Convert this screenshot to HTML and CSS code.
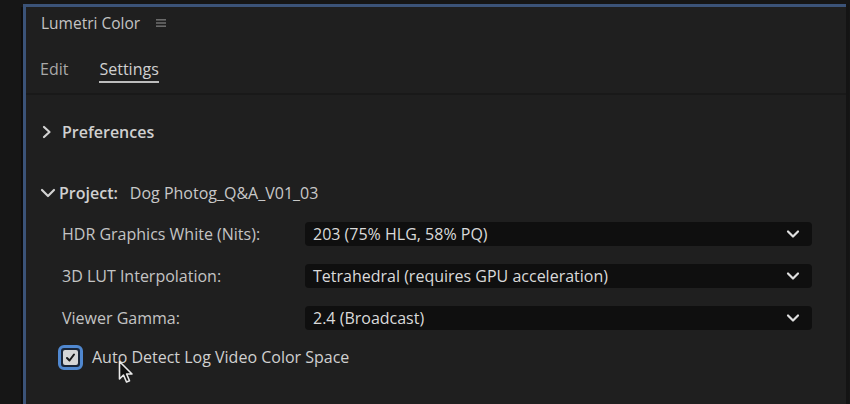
FILE: index.html
```html
<!DOCTYPE html>
<html>
<head>
<meta charset="utf-8">
<link rel="stylesheet" href="styles.css">
</head>
<body>
<div class="app">
  <div class="gutter"></div>
  <div class="panel">
    <div class="header">
      <span class="title">Lumetri Color</span>
      <svg class="menu" width="10" height="10" viewBox="0 0 10 10"><rect x="0" y="1" width="10" height="1.6" fill="#6a6a6a"/><rect x="0" y="4.2" width="10" height="1.6" fill="#6a6a6a"/><rect x="0" y="7.4" width="10" height="1.6" fill="#6a6a6a"/></svg>
    </div>
    <div class="tabs">
      <span class="tab">Edit</span>
      <span class="tab active">Settings</span>
    </div>
    <div class="content">
      <div class="section-head pref">
        <svg class="chev" width="12" height="14" viewBox="0 0 12 14"><path d="M3 2 L8.5 7 L3 12" fill="none" stroke="#d2d2d2" stroke-width="2.2" stroke-linecap="round" stroke-linejoin="round"/></svg>
        <span class="sec-title">Preferences</span>
      </div>
      <div class="section-head proj">
        <svg class="chev down" width="16" height="12" viewBox="0 0 16 12"><path d="M2 3 L8 9 L14 3" fill="none" stroke="#d2d2d2" stroke-width="2.2" stroke-linecap="round" stroke-linejoin="round"/></svg>
        <span class="sec-title">Project:</span>
        <span class="proj-name">Dog Photog_Q&amp;A_V01_03</span>
      </div>
      <div class="rows">
        <div class="row">
          <span class="label">HDR Graphics White (Nits):</span>
          <div class="select"><span>203 (75% HLG, 58% PQ)</span><svg width="14" height="10" viewBox="0 0 14 10"><path d="M2 2.5 L7 7.5 L12 2.5" fill="none" stroke="#e0e0e0" stroke-width="2.2" stroke-linecap="round" stroke-linejoin="round"/></svg></div>
        </div>
        <div class="row">
          <span class="label">3D LUT Interpolation:</span>
          <div class="select"><span>Tetrahedral (requires GPU acceleration)</span><svg width="14" height="10" viewBox="0 0 14 10"><path d="M2 2.5 L7 7.5 L12 2.5" fill="none" stroke="#e0e0e0" stroke-width="2.2" stroke-linecap="round" stroke-linejoin="round"/></svg></div>
        </div>
        <div class="row">
          <span class="label">Viewer Gamma:</span>
          <div class="select"><span>2.4 (Broadcast)</span><svg width="14" height="10" viewBox="0 0 14 10"><path d="M2 2.5 L7 7.5 L12 2.5" fill="none" stroke="#e0e0e0" stroke-width="2.2" stroke-linecap="round" stroke-linejoin="round"/></svg></div>
        </div>
      </div>
      <div class="check-row">
        <span class="checkbox"><svg width="15" height="15" viewBox="0 0 15 15"><path d="M4 8 L6.5 10.5 L11 4.5" fill="none" stroke="#1a1a1a" stroke-width="2" stroke-linecap="round" stroke-linejoin="round"/></svg></span>
        <span class="check-label">Auto Detect Log Video Color Space</span>
        <svg class="cursor" width="18" height="26" viewBox="0 0 18 26"><path d="M1.5 1.5 L1.5 19 L5.5 15 L8.5 22 L11.5 20.7 L8.6 14 L14 14 Z" fill="#111" stroke="#e8e8e8" stroke-width="1.6" stroke-linejoin="round"/></svg>
      </div>
    </div>
  </div>
</div>
</body>
</html>
```
FILE: styles.css
```css
* { box-sizing: border-box; }
html, body { margin: 0; padding: 0; }
body {
  background: #161616;
  width: 850px;
  height: 404px;
  overflow: hidden;
  font-family: "Open Sans", "Noto Sans", sans-serif;
  color: #c9c9c9;
}
.app {
  display: flex;
  height: 404px;
  padding-top: 4px;
}
.gutter {
  width: 23px;
  border-right: 2px solid #0c0c0c;
  margin-top: 3px;
}
.panel {
  flex: 1;
  background: #1f1f1f;
  border-top: 3px solid #3b5378;
  border-left: 3px solid #3b5378;
  margin-right: 4px;
  box-shadow: 3px 0 0 #141414;
}
.header {
  display: flex;
  align-items: center;
  height: 31px;
  padding: 0 0 0 15px;
}
.title {
  font-size: 15.5px;
  color: #c4c4c4;
}
.menu { margin-left: 16px; }
.tabs {
  display: flex;
  gap: 31px;
  height: 57px;
  align-items: flex-start;
  padding: 20px 0 0 14px;
  border-bottom: 2px solid #191919;
}
.tab {
  font-size: 16px;
  color: #a8a8a8;
  padding-bottom: 1px;
  line-height: 22px;
}
.tab.active {
  color: #d0d0d0;
  border-bottom: 2.5px solid #bdbdbd;
}
.content {
  padding: 25px 0 0 14px;
}
.section-head {
  display: flex;
  align-items: center;
  height: 24px;
}
.pref { gap: 9px; padding-left: 1px; }
.proj { gap: 3px; margin-top: 37px; }
.sec-title {
  font-size: 16px;
  font-weight: 600;
  color: #d0d0d0;
}
.proj-name {
  font-size: 16px;
  color: #c8c8c8;
  margin-left: 9px;
}
.rows {
  display: flex;
  flex-direction: column;
  gap: 18px;
  margin-top: 17px;
  padding-left: 22px;
}
.row {
  display: flex;
  align-items: center;
  height: 24px;
}
.label {
  width: 243px;
  font-size: 16px;
  color: #c4c4c4;
}
.select {
  width: 507px;
  height: 24px;
  background: #0f0f0f;
  border-radius: 4px;
  display: flex;
  align-items: center;
  justify-content: space-between;
  padding: 0 12px 0 8px;
  font-size: 16px;
  color: #dadada;
}
.check-row {
  position: relative;
  display: flex;
  align-items: center;
  gap: 9px;
  margin-top: 14px;
  padding-left: 18px;
  height: 26px;
}
.checkbox {
  width: 25px;
  height: 25px;
  border-radius: 6px;
  border: 3px solid #5088d0;
  background: #1a2638;
  display: flex;
  align-items: center;
  justify-content: center;
}
.checkbox svg {
  background: #d6d6d6;
  border-radius: 2px;
}
.check-label {
  font-size: 16px;
  color: #d0d0d0;
}
.cursor {
  position: absolute;
  left: 78px;
  top: 16px;
}
```
